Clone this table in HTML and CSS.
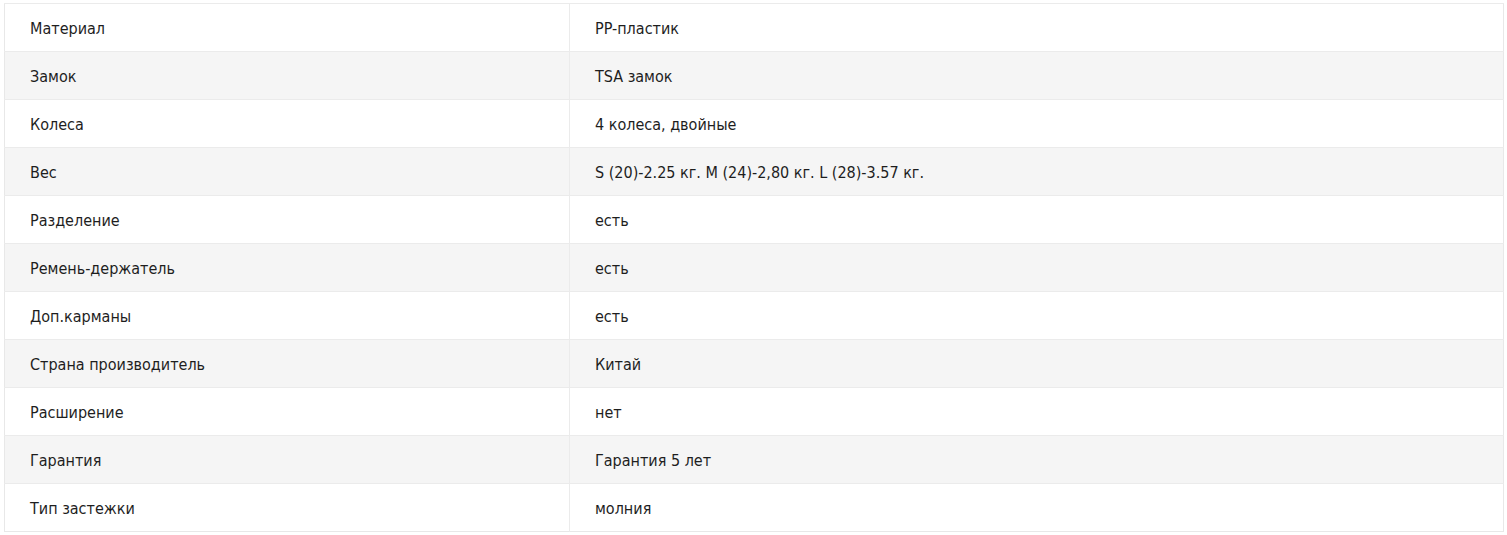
FILE: index.html
```html
<!DOCTYPE html>
<html lang="ru">
<head>
<meta charset="utf-8">
<link rel="stylesheet" href="styles.css">
</head>
<body>
<table class="specs">
  <tbody>
    <tr><td class="name">Материал</td><td class="value">PP-пластик</td></tr>
    <tr><td class="name">Замок</td><td class="value">TSA замок</td></tr>
    <tr><td class="name">Колеса</td><td class="value">4 колеса, двойные</td></tr>
    <tr><td class="name">Вес</td><td class="value">S (20)-2.25 кг. M (24)-2,80 кг. L (28)-3.57 кг.</td></tr>
    <tr><td class="name">Разделение</td><td class="value">есть</td></tr>
    <tr><td class="name">Ремень-держатель</td><td class="value">есть</td></tr>
    <tr><td class="name">Доп.карманы</td><td class="value">есть</td></tr>
    <tr><td class="name">Страна производитель</td><td class="value">Китай</td></tr>
    <tr><td class="name">Расширение</td><td class="value">нет</td></tr>
    <tr><td class="name">Гарантия</td><td class="value">Гарантия 5 лет</td></tr>
    <tr><td class="name">Тип застежки</td><td class="value">молния</td></tr>
  </tbody>
</table>
</body>
</html>
```

FILE: styles.css
```css
html, body {
  margin: 0;
  padding: 0;
  background: #ffffff;
}

body {
  padding: 3px 3px 0 4px;
  font-family: "DejaVu Sans Condensed", "Liberation Sans Narrow", "Liberation Sans", sans-serif;
  font-size: 16px;
  color: #1e1e1e;
}

.specs {
  width: 1500px;
  border-collapse: collapse;
  border: 1px solid #e8e8e8;
}

.specs tr {
  height: 48px;
}

.specs tr:nth-child(even) {
  background: #f5f5f5;
}

.specs td {
  border-top: 1px solid #ebebeb;
  padding: 2px 25px 0;
  vertical-align: middle;
  line-height: 20px;
}

.specs td.name {
  width: 514px;
  border-right: 1px solid #ebebeb;
}
```
